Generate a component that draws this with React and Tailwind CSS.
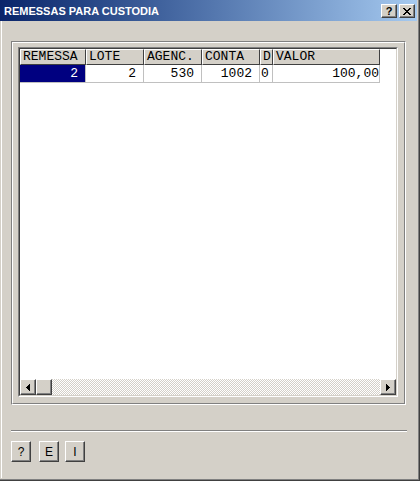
import React from 'react';

// Columns of the grid; widths include the 1px grid line on the right
const columns = [
  { title: 'REMESSA', value: '2', width: 'w-[66px]', cell: 'justify-end pr-[7px]' },
  { title: 'LOTE', value: '2', width: 'w-[58px]', cell: 'justify-end pr-[7px]' },
  { title: 'AGENC.', value: '530', width: 'w-[58px]', cell: 'justify-end pr-[7px]' },
  { title: 'CONTA', value: '1002', width: 'w-[58px]', cell: 'justify-end pr-[7px]' },
  { title: 'D', value: '0', width: 'w-[13px]', cell: 'justify-start pl-[1px]' },
  { title: 'VALOR', value: '100,00', width: 'w-[107px]', cell: 'justify-end pr-0' },
];

const raised =
  'border border-t-white border-l-white border-r-[#404040] border-b-[#404040] shadow-[inset_-1px_-1px_0_#808080] bg-[#d4d0c8]';

const ScrollButton = ({ dir }) => (
  <div className={`w-[16px] h-[16px] flex items-center justify-center ${raised}`}>
    <svg width="4" height="7" viewBox="0 0 4 7" shapeRendering="crispEdges">
      {dir === 'left' ? <polygon points="4,0 4,7 0,3.5" fill="#000" /> : <polygon points="0,0 0,7 4,3.5" fill="#000" />}
    </svg>
  </div>
);

const App = () => {
  return (
    <div className="w-[420px] h-[481px] bg-[#d4d0c8] border-r border-b border-[#404040] font-['Liberation_Sans',Arial,sans-serif]">
      <div className="h-full flex flex-col border-r border-b border-[#808080] pr-[1px] pb-[1px]">
        {/* Title bar */}
        <div className="h-[21px] shrink-0 flex items-center bg-linear-to-r from-[#0a246a] to-[#a6caf0] pl-[4px] pr-[2px]">
          <span className="text-white font-bold text-[11px] leading-[13px] pt-[2px]">REMESSAS PARA CUSTODIA</span>
          <div className="ml-auto flex gap-[2px] pt-[1px]">
            <div className={`w-[16px] h-[14px] flex items-center justify-center ${raised}`}>
              <span className="text-[11px] font-bold leading-[11px] text-black">?</span>
            </div>
            <div className={`w-[16px] h-[14px] flex items-center justify-center ${raised}`}>
              <svg width="8" height="7" viewBox="0 0 8 7" shapeRendering="crispEdges">
                <path d="M0 0h2v1h1v1h2v-1h1v-1h2v1h-1v1h-1v1h-1v1h1v1h1v1h1v1h-2v-1h-1v-1h-2v1h-1v1h-2v-1h1v-1h1v-1h1v-1h-1v-1h-1v-1h-1z" fill="#000" />
              </svg>
            </div>
          </div>
        </div>

        {/* Body */}
        <div className="flex-1 ml-[1px] border-l border-l-white pl-[9px] pt-[20px]">
          {/* Etched panel */}
          <div className="w-[395px] h-[364px] border border-t-[#808080] border-l-[#808080] border-b-white border-r-white">
            <div className="h-full border border-t-white border-l-white border-b-[#808080] border-r-[#808080] pl-[5px] pt-[4px]">
              {/* Grid */}
              <div className="w-[380px] h-[350px] border border-t-[#808080] border-l-[#808080] border-b-white border-r-white">
                <div className="h-full flex flex-col bg-white border border-t-[#404040] border-l-[#404040] border-b-[#d4d0c8] border-r-[#d4d0c8] font-['Liberation_Mono','Courier_New',monospace] text-[13px]">
                  <div className="flex">
                    {columns.map((col) => (
                      <div
                        key={col.title}
                        className={`${col.width} h-[16px] flex items-center pl-[2px] bg-[#d4d0c8] border border-t-white border-l-white border-r-[#404040] border-b-[#404040] leading-[14px] text-black overflow-hidden`}
                      >
                        {col.title}
                      </div>
                    ))}
                  </div>
                  <div className="flex">
                    {columns.map((col, i) => (
                      <div
                        key={col.title}
                        className={`${col.width} h-[18px] flex items-center ${col.cell} border-r border-b border-[#c0c0c0] leading-[17px] overflow-hidden ${
                          i === 0 ? 'bg-[#000080] text-white' : 'bg-white text-black'
                        }`}
                      >
                        {col.value}
                      </div>
                    ))}
                  </div>
                  <div className="flex-1" />
                  {/* Horizontal scroll bar */}
                  <div className="h-[16px] flex">
                    <ScrollButton dir="left" />
                    <div className={`w-[16px] h-[16px] ${raised}`} />
                    <div className="flex-1 bg-[repeating-conic-gradient(#ffffff_0_25%,#d4d0c8_0_50%)] bg-size-[2px_2px]" />
                    <ScrollButton dir="right" />
                  </div>
                </div>
              </div>
            </div>
          </div>

          {/* Separator */}
          <div className="mt-[25px] w-[396px] h-[2px] border-t border-t-[#808080] border-b border-b-white" />

          {/* Bottom buttons */}
          <div className="mt-[9px] flex">
            {['?', 'E', 'I'].map((label, i) => (
              <button
                key={label}
                type="button"
                className={`w-[20px] h-[21px] flex items-center justify-center text-[12px] leading-[12px] text-black ${raised} ${
                  i === 0 ? 'mr-[8px]' : 'mr-[6px]'
                }`}
              >
                {label}
              </button>
            ))}
          </div>
        </div>
      </div>
    </div>
  );
};

export default App;
